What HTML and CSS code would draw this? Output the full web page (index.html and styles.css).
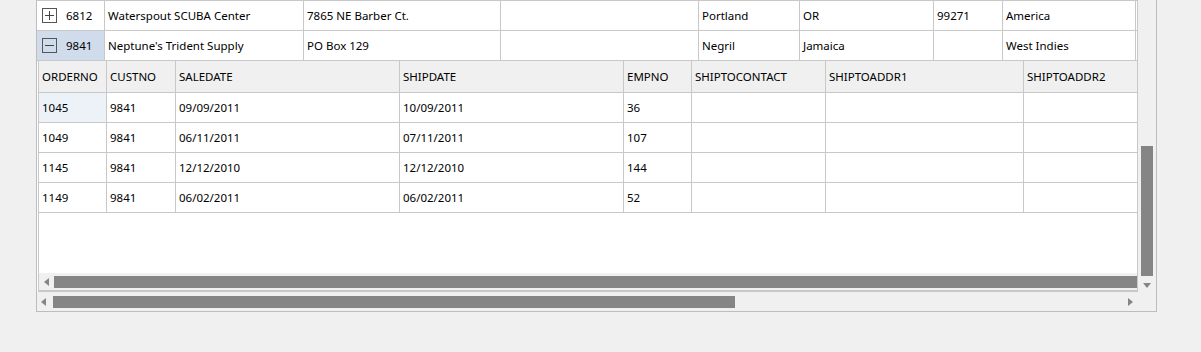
FILE: index.html
```html
<!DOCTYPE html>
<html lang="en">
<head>
  <meta charset="UTF-8" />
  <title>Customers / Orders grid</title>
  <link rel="stylesheet" href="styles.css">
</head>
<body>
<div class="frame">
  <div class="content">
    <!-- master rows -->
    <div class="master">
      <div class="mrow">
        <div class="cell key"><span class="expander plus"></span>6812</div>
        <div class="cell">Waterspout SCUBA Center</div>
        <div class="cell">7865 NE Barber Ct.</div>
        <div class="cell"></div>
        <div class="cell">Portland</div>
        <div class="cell">OR</div>
        <div class="cell">99271</div>
        <div class="cell">America</div>
      </div>
      <div class="mrow">
        <div class="cell key current"><span class="expander minus"></span>9841</div>
        <div class="cell">Neptune's Trident Supply</div>
        <div class="cell">PO Box 129</div>
        <div class="cell"></div>
        <div class="cell">Negril</div>
        <div class="cell">Jamaica</div>
        <div class="cell"></div>
        <div class="cell">West Indies</div>
      </div>
    </div>

    <!-- detail grid -->
    <div class="detail">
      <div class="dbody">
        <div class="drow head">
          <div class="cell">ORDERNO</div>
          <div class="cell">CUSTNO</div>
          <div class="cell">SALEDATE</div>
          <div class="cell">SHIPDATE</div>
          <div class="cell">EMPNO</div>
          <div class="cell">SHIPTOCONTACT</div>
          <div class="cell">SHIPTOADDR1</div>
          <div class="cell">SHIPTOADDR2</div>
        </div>
        <div class="drow">
          <div class="cell focus">1045</div><div class="cell">9841</div><div class="cell">09/09/2011</div><div class="cell">10/09/2011</div>
          <div class="cell">36</div><div class="cell"></div><div class="cell"></div><div class="cell"></div>
        </div>
        <div class="drow">
          <div class="cell">1049</div><div class="cell">9841</div><div class="cell">06/11/2011</div><div class="cell">07/11/2011</div>
          <div class="cell">107</div><div class="cell"></div><div class="cell"></div><div class="cell"></div>
        </div>
        <div class="drow">
          <div class="cell">1145</div><div class="cell">9841</div><div class="cell">12/12/2010</div><div class="cell">12/12/2010</div>
          <div class="cell">144</div><div class="cell"></div><div class="cell"></div><div class="cell"></div>
        </div>
        <div class="drow">
          <div class="cell">1149</div><div class="cell">9841</div><div class="cell">06/02/2011</div><div class="cell">06/02/2011</div>
          <div class="cell">52</div><div class="cell"></div><div class="cell"></div><div class="cell"></div>
        </div>
      </div>
      <div class="hscroll inner">
        <span class="arrow left"></span>
        <div class="thumb inner-thumb"></div>
      </div>
    </div>
  </div>

  <div class="vscroll">
    <div class="vthumb"></div>
    <span class="arrow down"></span>
  </div>

  <div class="hscroll outer">
    <span class="arrow left"></span>
    <div class="thumb outer-thumb"></div>
    <span class="arrow right"></span>
  </div>
  <div class="corner"></div>
</div>
</body>
</html>
```

FILE: styles.css
```css
body { margin: 0; background: #f0f0f0; font-family: "Segoe UI", "Noto Sans", "Open Sans", sans-serif; font-size: 11.5px; color: #000; }
* { box-sizing: border-box; }

.frame { margin-left: 36px; width: 1121px; height: 312px; border: 1px solid #bdbdbd; border-top: 0; display: grid; grid-template-columns: 1101px 18px; grid-template-rows: 292px 19px; }
.content { display: flex; flex-direction: column; overflow: hidden; background: #fff; }

.cell { height: 100%; padding-left: 3px; border-right: 1px solid #c8c8c8; display: flex; align-items: center; white-space: nowrap; overflow: hidden; }

.master { border-top: 1px solid #c8c8c8; border-right: 1px solid #c8c8c8; }
.mrow { height: 30px; display: grid; grid-template-columns: 68px 199px 197px 198px 101px 134px 69px 133px; border-bottom: 1px solid #c8c8c8; }
.key { padding-left: 5px; }
.current { background: #d0dcec; }
.expander { width: 15px; height: 15px; border: 1px solid #555; margin-right: 9px; position: relative; flex: none; }
.expander::before { content: ""; position: absolute; left: 2px; right: 2px; top: 6px; height: 1px; background: #444; }
.plus::after { content: ""; position: absolute; top: 2px; bottom: 2px; left: 6px; width: 1px; background: #444; }

.detail { margin-left: 1px; height: 231px; border-left: 1px solid #c8c8c8; border-right: 1px solid #c8c8c8; border-bottom: 2px solid #c8c8c8; display: grid; grid-template-rows: 1fr 17px; }
.dbody { overflow: hidden; }
.drow { height: 30px; display: grid; grid-template-columns: 68px 69px 224px 224px 68px 134px 198px 200px; border-bottom: 1px solid #c8c8c8; }
.drow.head { height: 32px; background: #f0f0f0; }
.focus { background: #edf2f9; }

.hscroll { display: flex; align-items: center; background: #f0f0f0; }
.inner { padding-left: 5px; }
.inner-thumb { flex: 1; height: 12px; margin-left: 5px; align-self: flex-start; margin-top: 3px; }
.outer { padding-left: 4px; padding-right: 5px; }
.outer-thumb { width: 682px; height: 12px; margin-left: 7px; margin-right: auto; }
.thumb { background: #858585; }

.vscroll { background: #f0f0f0; display: flex; flex-direction: column; align-items: center; padding-top: 146px; }
.vthumb { width: 12px; height: 130px; background: #858585; }

.arrow { width: 0; height: 0; border-style: solid; border-color: transparent; flex: none; }
.arrow.left { border-width: 4px 5px 4px 0; border-right-color: #858585; }
.arrow.right { border-width: 4px 0 4px 5px; border-left-color: #858585; }
.arrow.down { border-width: 5px 4px 0 4px; border-top-color: #858585; margin-top: 7px; }

.corner { background: #f0f0f0; }
```
